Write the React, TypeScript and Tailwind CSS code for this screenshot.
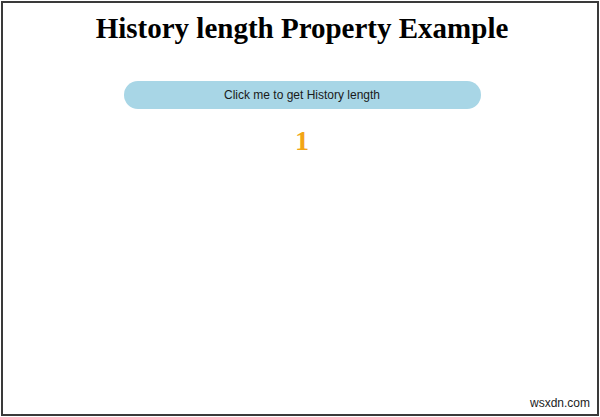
export default function App() {
  return (
    <div className="relative w-[600px] h-[417px] bg-white p-[1px]">
      <div className="w-full h-full border-2 border-[#3a3a3a] flex flex-col items-center pl-[4px]">
        <h1 className="mt-[8px] text-[29px] leading-[35px] font-bold text-black font-['Liberation_Serif','Times_New_Roman',serif]">
          History length Property Example
        </h1>
        <button className="mt-[35px] w-[357px] h-[28px] rounded-full bg-[#a8d6e6] text-[12px] text-[#1a1a1a] font-['Liberation_Sans',Arial,sans-serif]">
          Click me to get History length
        </button>
        <div className="mt-[15px] text-[28px] leading-[34px] font-bold text-[#f2a516] font-['Liberation_Serif','Times_New_Roman',serif]">
          1
        </div>
      </div>
      <div className="absolute right-[10px] bottom-[5px] text-[12px] text-[#222] font-['Liberation_Sans',Arial,sans-serif]">
        wsxdn.com
      </div>
    </div>
  );
}
